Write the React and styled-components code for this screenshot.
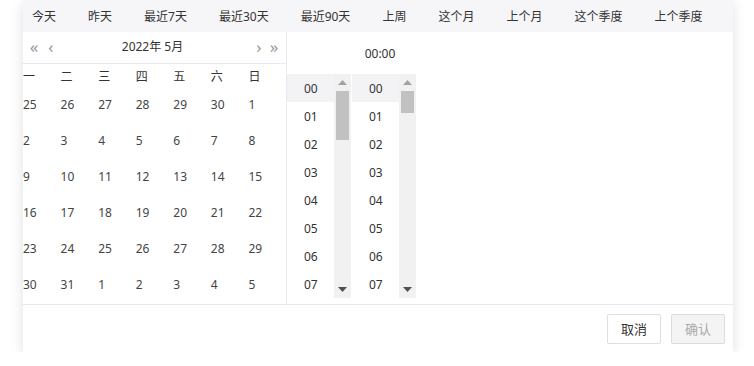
import React from 'react';
import styled, { createGlobalStyle } from 'styled-components';

const GlobalStyle = createGlobalStyle`
  html, body {
    margin: 0;
    padding: 0;
    background: #fff;
    font-family: "Noto Sans", "Noto Sans CJK SC", sans-serif;
  }
`;

const Panel = styled.div`
  margin-left: 23px;
  width: 710px;
  height: 352px;
  background: #fff;
  box-shadow: 0 3px 12px rgba(0, 0, 0, 0.13);
  display: flex;
  flex-direction: column;
`;

const Shortcuts = styled.div`
  height: 32px;
  background: #f6f6f9;
  display: flex;
  align-items: center;
  padding-left: 9px;
  gap: 32px;
`;

const Shortcut = styled.span`
  font-size: 12px;
  color: #333;
`;

const Body = styled.div`
  display: flex;
  height: 272px;
  border-bottom: 1px solid #e9e9f2;
`;

const Calendar = styled.div`
  width: 263px;
  border-right: 1px solid #e9e9f2;
  display: flex;
  flex-direction: column;
`;

const CalHeader = styled.div`
  height: 32px;
  box-sizing: border-box;
  border-bottom: 1px solid #e9e9f2;
  display: flex;
  align-items: center;
  padding: 0 4px 3px 4px;
`;

const Arrow = styled.span`
  font-size: 17px;
  color: #999;
  width: ${p => p.$w || 14}px;
  text-align: center;
  line-height: 1;
`;

const Title = styled.span`
  flex: 1;
  text-align: center;
  font-size: 12px;
  color: #333;
  padding-right: 8px;
`;

const Grid = styled.div`
  display: grid;
  grid-template-columns: repeat(7, 1fr);
  grid-template-rows: 24px;
  grid-auto-rows: 36px;
`;

const Cell = styled.div`
  font-size: 12px;
  color: ${p => p.$head ? '#333' : '#444'};
  display: flex;
  align-items: center;
  padding-bottom: ${p => p.$head ? 0 : 3}px;
`;

const TimePane = styled.div`
  flex: 1;
  display: flex;
  flex-direction: column;
`;

const TimeHead = styled.div`
  width: 186px;
  height: 42px;
  display: flex;
  align-items: center;
  justify-content: center;
  font-size: 12px;
  color: #333;
`;

const Columns = styled.div`
  display: flex;
`;

const Column = styled.div`
  display: flex;
  height: 224px;
  margin-right: ${p => p.$gap || 0}px;
`;

const List = styled.div`
  width: 47px;
  display: flex;
  flex-direction: column;
  overflow: hidden;
`;

const Item = styled.div`
  height: 28px;
  flex-shrink: 0;
  display: flex;
  align-items: center;
  padding-left: 17px;
  font-size: 12px;
  color: #333;
  background: ${p => p.$active ? '#f3f3f5' : 'transparent'};
`;

const Scrollbar = styled.div`
  width: 17px;
  background: #f1f1f1;
  display: flex;
  flex-direction: column;
  align-items: center;
`;

const ScrollBtn = styled.div`
  height: 17px;
  display: flex;
  align-items: center;
  justify-content: center;
`;

const Track = styled.div`
  flex: 1;
`;

const Thumb = styled.div`
  width: 13px;
  height: ${p => p.$h}px;
  background: #c1c1c1;
`;

const Footer = styled.div`
  flex: 1;
  display: flex;
  justify-content: flex-end;
  align-items: center;
  gap: 10px;
  padding-right: 8px;
`;

const Button = styled.button`
  width: 54px;
  height: 30px;
  border: 1px solid ${p => p.$disabled ? '#dcdcdc' : '#dcdfe6'};
  border-radius: 2px;
  background: ${p => p.$disabled ? '#f4f4f5' : '#fff'};
  color: ${p => p.$disabled ? '#aaa' : '#333'};
  font-size: 13px;
  font-family: "Noto Sans CJK SC", sans-serif;
  padding: 0;
`;

const shortcuts = ['今天', '昨天', '最近7天', '最近30天', '最近90天', '上周', '这个月', '上个月', '这个季度', '上个季度'];
const weekdays = ['一', '二', '三', '四', '五', '六', '日'];
const days = [
  25, 26, 27, 28, 29, 30, 1,
  2, 3, 4, 5, 6, 7, 8,
  9, 10, 11, 12, 13, 14, 15,
  16, 17, 18, 19, 20, 21, 22,
  23, 24, 25, 26, 27, 28, 29,
  30, 31, 1, 2, 3, 4, 5,
];
const hours = ['00', '01', '02', '03', '04', '05', '06', '07'];

const Up = () => (
  <svg width="9" height="5" viewBox="0 0 9 5"><path d="M0 5 L4.5 0 L9 5 Z" fill="#a3a3a3" /></svg>
);
const Down = () => (
  <svg width="9" height="5" viewBox="0 0 9 5"><path d="M0 0 L4.5 5 L9 0 Z" fill="#505050" /></svg>
);

const TimeColumn = ({ thumb, gap }) => (
  <Column $gap={gap}>
    <List>
      {hours.map((h, i) => <Item key={h} $active={i === 0}>{h}</Item>)}
    </List>
    <Scrollbar>
      <ScrollBtn><Up /></ScrollBtn>
      <Thumb $h={thumb} />
      <Track />
      <ScrollBtn><Down /></ScrollBtn>
    </Scrollbar>
  </Column>
);

const App = () => (
  <>
    <GlobalStyle />
    <Panel>
      <Shortcuts>
        {shortcuts.map(s => <Shortcut key={s}>{s}</Shortcut>)}
      </Shortcuts>
      <Body>
        <Calendar>
          <CalHeader>
            <Arrow $w={14}>«</Arrow>
            <Arrow $w={20}>‹</Arrow>
            <Title>2022年 5月</Title>
            <Arrow $w={14}>›</Arrow>
            <Arrow $w={16}>»</Arrow>
          </CalHeader>
          <Grid>
            {weekdays.map(w => <Cell key={w} $head>{w}</Cell>)}
            {days.map((d, i) => <Cell key={i}>{d}</Cell>)}
          </Grid>
        </Calendar>
        <TimePane>
          <TimeHead>00:00</TimeHead>
          <Columns>
            <TimeColumn thumb={49} gap={1} />
            <TimeColumn thumb={22} />
          </Columns>
        </TimePane>
      </Body>
      <Footer>
        <Button>取消</Button>
        <Button $disabled>确认</Button>
      </Footer>
    </Panel>
  </>
);

export default App;
